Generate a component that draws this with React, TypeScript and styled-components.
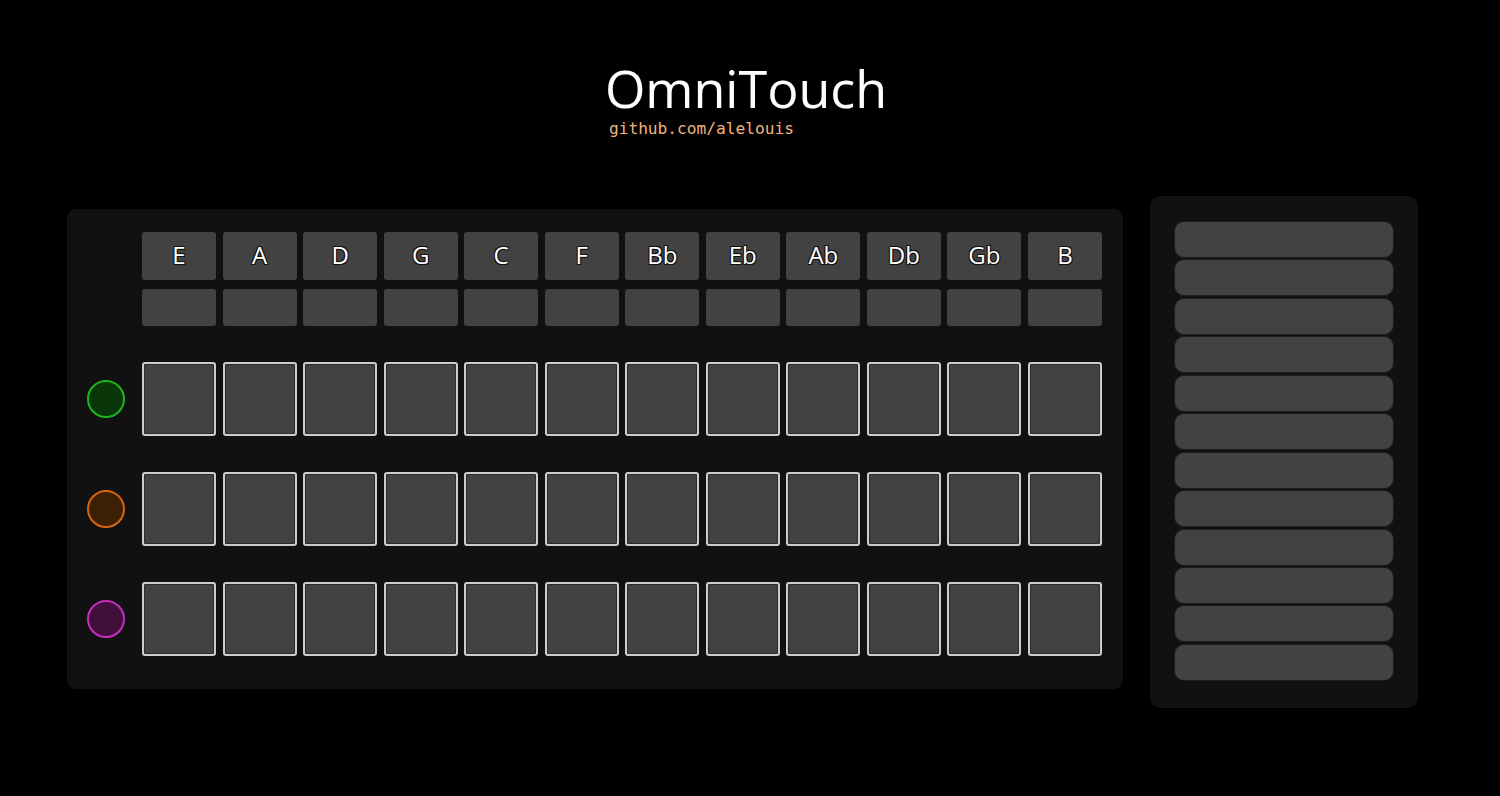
import React from "react";
import styled, { createGlobalStyle } from "styled-components";

const GlobalStyle = createGlobalStyle`
  html, body { margin: 0; padding: 0; background: #000; }
  body { font-family: "Open Sans", "DejaVu Sans", sans-serif; color: #fff; }
`;

const Page = styled.div`
  width: 1500px;
  height: 796px;
  background: #000;
  display: flex;
  flex-direction: column;
  align-items: center;
`;

const Header = styled.header`
  margin-top: 60px;
  margin-right: 8px;
  display: flex;
  flex-direction: column;
  align-items: flex-start;
`;

const Title = styled.h1`
  margin: 0;
  font-family: "Open Sans", sans-serif;
  font-weight: 400;
  font-size: 52px;
  line-height: 56px;
  color: #fff;
  text-shadow: 0 0 2px #000, 0 0 1px #555;
`;

const Sub = styled.a`
  margin-left: 4px;
  margin-top: 4px;
  font-family: "DejaVu Sans Mono", monospace;
  font-size: 16.2px;
  line-height: 18px;
  color: #f2b27c;
  text-decoration: none;
`;

const Stage = styled.div`
  margin-top: 58px;
  padding-right: 15px;
  display: flex;
  align-items: center;
  gap: 27px;
`;

const MainPanel = styled.section`
  width: 1056px;
  box-sizing: border-box;
  margin-bottom: 5px;
  padding: 23px 21px 33px 20px;
  background: #111;
  border-radius: 9px;
  display: flex;
  flex-direction: column;
`;

const Row = styled.div<{ $gapAfter: number }>`
  display: flex;
  align-items: center;
  margin-bottom: ${(p) => p.$gapAfter}px;
`;

const LeadSlot = styled.div`
  width: 38px;
  margin-right: 17px;
  display: flex;
  justify-content: center;
`;

const Grid = styled.div`
  flex: 1;
  display: grid;
  grid-template-columns: repeat(12, 1fr);
  column-gap: 6.5px;
`;

const KeyLabel = styled.div`
  height: 48px;
  box-sizing: border-box;
  padding-bottom: 3px;
  background: #424242;
  border-radius: 3px;
  display: flex;
  align-items: center;
  justify-content: center;
  font-family: "Open Sans", sans-serif;
  font-size: 24px;
  color: #fff;
  text-shadow: -1px -1px 0 #111, 1px -1px 0 #111, -1px 1px 0 #111, 1px 1px 0 #111;
`;

const KeySlot = styled.div`
  height: 37px;
  background: #424242;
  border-radius: 3px;
`;

const Pad = styled.div`
  height: 74px;
  box-sizing: border-box;
  background: #424242;
  border: 2px solid #cdcdcd;
  border-radius: 3px;
  box-shadow: inset 0 0 0 1px #2c2c2c;
`;

const Dot = styled.div<{ $ring: string; $fill: string }>`
  width: 38px;
  height: 38px;
  box-sizing: border-box;
  border-radius: 50%;
  border: 2px solid ${(p) => p.$ring};
  background: ${(p) => p.$fill};
`;

const SidePanel = styled.aside`
  width: 268px;
  box-sizing: border-box;
  padding: 25px 24px 27px 24px;
  background: #111;
  border-radius: 10px;
  display: flex;
  flex-direction: column;
  gap: 1.45px;
`;

const Strip = styled.div`
  height: 37px;
  box-sizing: border-box;
  background: #424242;
  border: 1px solid #1e1e1e;
  border-radius: 10px;
`;

const keys = ["E", "A", "D", "G", "C", "F", "Bb", "Eb", "Ab", "Db", "Gb", "B"];
const voices = [
  { ring: "#1fb41f", fill: "#093709" },
  { ring: "#d6660f", fill: "#3d1f04" },
  { ring: "#c42fbd", fill: "#420f3c" },
];

export default function App() {
  return (
    <>
      <GlobalStyle />
      <Page>
        <Header>
          <Title>OmniTouch</Title>
          <Sub>github.com/alelouis</Sub>
        </Header>
        <Stage>
          <MainPanel>
            <Row $gapAfter={9}>
              <LeadSlot />
              <Grid>
                {keys.map((k) => (
                  <KeyLabel key={k}>{k}</KeyLabel>
                ))}
              </Grid>
            </Row>
            <Row $gapAfter={36}>
              <LeadSlot />
              <Grid>
                {keys.map((k) => (
                  <KeySlot key={k} />
                ))}
              </Grid>
            </Row>
            {voices.map((v, i) => (
              <Row key={i} $gapAfter={i < voices.length - 1 ? 36 : 0}>
                <LeadSlot>
                  <Dot $ring={v.ring} $fill={v.fill} />
                </LeadSlot>
                <Grid>
                  {keys.map((k) => (
                    <Pad key={k} />
                  ))}
                </Grid>
              </Row>
            ))}
          </MainPanel>
          <SidePanel>
            {Array.from({ length: 12 }).map((_, i) => (
              <Strip key={i} />
            ))}
          </SidePanel>
        </Stage>
      </Page>
    </>
  );
}
